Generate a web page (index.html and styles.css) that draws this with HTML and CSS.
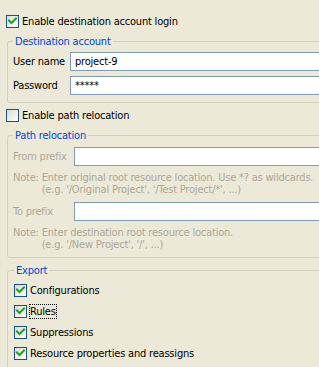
FILE: index.html
```html
<!DOCTYPE html>
<html>
<head>
<meta charset="utf-8">
<link rel="stylesheet" href="styles.css">
</head>
<body>
<div class="page">
  <div class="check-row top-row">
    <span class="cb"><svg class="tick" viewBox="0 0 11 11" width="11" height="11"><polyline points="2,4.5 4.5,7 9,2.5" /></svg></span>
    <span>Enable destination account login</span>
  </div>

  <fieldset class="group group-account">
    <legend>Destination account</legend>
    <div class="form-grid account-grid">
      <span class="field-label">User name</span>
      <div class="text-input">project-9</div>
      <span class="field-label">Password</span>
      <div class="text-input">*****</div>
    </div>
  </fieldset>

  <div class="check-row top-row second">
    <span class="cb"></span>
    <span>Enable path relocation</span>
  </div>

  <fieldset class="group group-path">
    <legend>Path relocation</legend>
    <div class="form-grid path-grid">
      <span class="field-label disabled">From prefix</span>
      <div class="text-input"></div>
      <div class="note disabled">
        <span class="note-head">Note:&nbsp;</span>
        <span class="note-body">
          <span class="note-line">Enter original root resource location. Use *? as wildcards.</span>
          <span class="note-line">(e.g. '/Original Project', '/Test Project/*', ...)</span>
        </span>
      </div>
      <span class="field-label disabled">To prefix</span>
      <div class="text-input"></div>
      <div class="note disabled">
        <span class="note-head">Note:&nbsp;</span>
        <span class="note-body">
          <span class="note-line">Enter destination root resource location.</span>
          <span class="note-line">(e.g. '/New Project', '/', ...)</span>
        </span>
      </div>
    </div>
  </fieldset>

  <fieldset class="group group-export">
    <legend>Export</legend>
    <div class="export-list">
      <div class="check-row">
        <span class="cb"><svg class="tick" viewBox="0 0 11 11" width="11" height="11"><polyline points="2,4.5 4.5,7 9,2.5" /></svg></span>
        <span>Configurations</span>
      </div>
      <div class="check-row">
        <span class="cb"><svg class="tick" viewBox="0 0 11 11" width="11" height="11"><polyline points="2,4.5 4.5,7 9,2.5" /></svg></span>
        <span class="focused">Rules</span>
      </div>
      <div class="check-row">
        <span class="cb"><svg class="tick" viewBox="0 0 11 11" width="11" height="11"><polyline points="2,4.5 4.5,7 9,2.5" /></svg></span>
        <span>Suppressions</span>
      </div>
      <div class="check-row">
        <span class="cb"><svg class="tick" viewBox="0 0 11 11" width="11" height="11"><polyline points="2,4.5 4.5,7 9,2.5" /></svg></span>
        <span>Resource properties and reassigns</span>
      </div>
    </div>
  </fieldset>
</div>
</body>
</html>
```

FILE: styles.css
```css
html, body {
  margin: 0;
  padding: 0;
  background: #ece9d8;
  height: 367px;
  overflow: hidden;
}

body {
  font-family: Tahoma, "DejaVu Sans Condensed", "Liberation Sans", sans-serif;
  font-size: 11px;
  letter-spacing: -0.2px;
  color: #000;
}

.page {
  padding-top: 14px;
}

.check-row {
  display: flex;
  align-items: center;
  gap: 3px;
  height: 15px;
  white-space: nowrap;
}

.top-row {
  margin-left: 6px;
}

.top-row.second {
  margin-top: 5px;
}

.cb {
  flex: none;
  width: 13px;
  height: 13px;
  box-sizing: border-box;
  border: 1px solid #1c5180;
  background: linear-gradient(135deg, #dcdcd7 0%, #f4f4f0 70%, #ffffff 100%);
  display: flex;
}

.tick polyline {
  fill: none;
  stroke: #21a121;
  stroke-width: 2;
  stroke-linecap: square;
}

.group {
  margin: 6px -40px 0 7px;
  border: 1px solid #d0d0bf;
  border-radius: 3px;
  padding: 4px 0 7px 5px;
  min-width: 0;
}

.group legend {
  padding: 0 2px;
  line-height: 13px;
  color: #0046d5;
}

.form-grid {
  display: grid;
  align-items: center;
}

.account-grid {
  grid-template-columns: 57px 1fr;
  row-gap: 5px;
}

.group-path {
  padding-top: 5px;
  padding-bottom: 6px;
}

.path-grid {
  grid-template-columns: 61px 1fr;
  row-gap: 6px;
}

.field-label {
  white-space: nowrap;
}

.disabled {
  color: #aca899;
}

.text-input {
  height: 19px;
  box-sizing: border-box;
  border: 1px solid #7f9db9;
  background: #fff;
  padding-left: 4px;
  line-height: 17px;
  white-space: nowrap;
}

.note {
  grid-column: 1 / -1;
  display: flex;
  line-height: 12px;
  white-space: nowrap;
}

.note-body {
  display: flex;
  flex-direction: column;
}

.group-export {
  padding: 6px 0 10px 6px;
}

.export-list {
  display: flex;
  flex-direction: column;
  gap: 6px;
}

.focused {
  outline: 1px dotted #000;
  outline-offset: 0;
  line-height: 13px;
}
```
